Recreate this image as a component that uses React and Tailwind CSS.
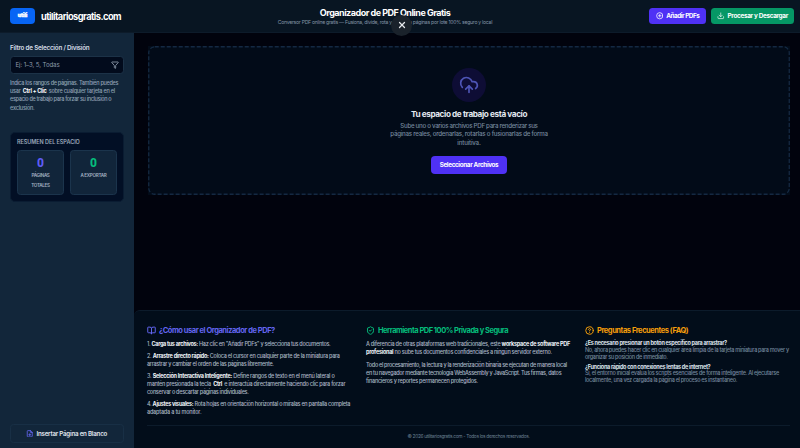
import React from "react";
import {
  BookOpen,
  CircleQuestionMark,
  CirclePlus,
  CloudUpload,
  Download,
  FilePlus,
  Funnel,
  ShieldCheck,
  X,
} from "lucide-react";

// Keeps every row of a paragraph on its own line
function Line({ children, className = "" }) {
  return <span className={`block whitespace-nowrap ${className}`}>{children}</span>;
}

function Strong({ children }) {
  return <strong className="font-bold text-[#f1f5f9]">{children}</strong>;
}

function Header() {
  return (
    <header className="relative flex h-[33px] shrink-0 items-center justify-between border-b border-[#0d1b2a] bg-[#081522] pl-[10px] pr-[6px]">
      <div className="flex items-center gap-[6px]">
        <div className="flex h-[16px] w-[25px] items-center justify-center rounded-[4px] bg-[#0765f5] text-[5.2px] font-black tracking-[-0.1px] text-white [-webkit-text-stroke:0.4px_white]">
          utili
        </div>
        <span className="pt-px text-[9.3px] font-bold tracking-[-0.56px] text-white">
          utilitariosgratis.com
        </span>
      </div>
      <div className="absolute inset-x-0 top-[8px] flex flex-col items-center pr-[30px] whitespace-nowrap">
        <h1 className="text-[9px] leading-[10px] font-bold tracking-[-0.5px] text-white">
          Organizador de PDF Online Gratis
        </h1>
        <p className="text-[5.1px] leading-[8px] tracking-[-0.265px] text-[#8596a8]">
          Conversor PDF online gratis — Fusiona, divide, rota y organiza páginas por lote 100% seguro y local
        </p>
      </div>
      <button className="absolute left-[391px] top-[14.5px] flex h-[21px] w-[21px] items-center justify-center rounded-full bg-[#1a222b] text-[#e4e8ec]">
        <X className="h-[10px] w-[10px]" strokeWidth={3} />
      </button>
      <div className="flex gap-[5px] text-[6.4px] font-bold whitespace-nowrap text-white">
        <button className="flex h-[16px] w-[57px] items-center justify-center gap-[3px] rounded-[3.5px] bg-[#4f31f5] tracking-[-0.48px]">
          <CirclePlus className="h-[7.5px] w-[7.5px]" strokeWidth={2.4} />
          <span className="pt-[1.5px]">Añadir PDFs</span>
        </button>
        <button className="flex h-[16px] w-[83px] items-center justify-center gap-[3px] rounded-[3.5px] bg-[#059765] tracking-[-0.34px]">
          <Download className="h-[7.5px] w-[7.5px]" />
          <span className="pt-[1.5px]">Procesar y Descargar</span>
        </button>
      </div>
    </header>
  );
}

function Stat({ value, color, children }) {
  return (
    <div className="flex h-[45px] w-[47px] flex-col items-center rounded-[3.5px] border border-[#1b344c] bg-[#11253a] pt-[5px]">
      <span className={`font-['Roboto',sans-serif] text-[12px] leading-[14px] font-extrabold ${color}`}>{value}</span>
      <span className="mt-[1px] text-center text-[4.6px] leading-[10px] font-semibold tracking-[-0.3px] whitespace-nowrap text-[#a3b1c2]">
        {children}
      </span>
    </div>
  );
}

function Sidebar() {
  return (
    <aside className="flex w-[134px] shrink-0 flex-col bg-[#12263a] px-[10px] pt-[10px] pb-[5px]">
      <label className="mt-[0.6px] text-[6.3px] leading-[9px] font-semibold tracking-[-0.22px] whitespace-nowrap text-[#d5dde6]">
        Filtro de Selección / División
      </label>
      <div className="mt-[3.4px] flex h-[18px] items-center justify-between rounded-[3.5px] border border-[#1c3247] bg-[#020b1c] pr-[4.5px] pl-[4.5px] text-[#8e9bab]">
        <span className="text-[6.1px] tracking-[-0.1px]">Ej: 1–3, 5, Todas</span>
        <Funnel className="h-[8px] w-[8px]" strokeWidth={2.6} />
      </div>
      <p className="mt-[5px] text-[5.5px] leading-[8.2px] font-medium text-[#8fa1b4]">
        <Line className="tracking-[-0.31px]">Indica los rangos de páginas. También puedes</Line>
        <Line className="tracking-[-0.25px]">
          usar <strong className="mx-[1px] font-bold text-white">Ctrl + Clic</strong> sobre cualquier tarjeta en el
        </Line>
        <Line className="tracking-[-0.34px]">espacio de trabajo para forzar su inclusión o</Line>
        <Line className="tracking-[-0.2px]">exclusión.</Line>
      </p>
      <section className="mt-[20px] h-[70px] rounded-[5px] border border-[#0a1c32] bg-[#020f25] px-[6px] pt-[5px]">
        <h2 className="text-[5.5px] leading-[9px] font-semibold tracking-[-0.06px] whitespace-nowrap text-[#9aa9ba]">
          RESUMEN DEL ESPACIO
        </h2>
        <div className="mt-[3px] flex gap-[6px]">
          <Stat value="0" color="text-[#5f5cf5]">
            PÁGINAS
            <br />
            TOTALES
          </Stat>
          <Stat value="0" color="text-[#05bd7c]">A EXPORTAR</Stat>
        </div>
      </section>
      <button className="mt-auto flex h-[19px] items-center justify-center gap-[3px] rounded-[3.5px] border border-[#182f45] pr-[1px] text-[6.2px] font-semibold tracking-[-0.22px] text-[#e2e8f0]">
        <FilePlus className="h-[7.5px] w-[7.5px] text-[#6366f1]" strokeWidth={2.6} />
        Insertar Página en Blanco
      </button>
    </aside>
  );
}

function EmptyWorkspace() {
  return (
    <section className="relative mt-[13px] mr-[10px] ml-[14px] flex h-[149px] flex-col items-center bg-[#020b18] pt-[22px]">
      <svg className="absolute inset-0 h-full w-full" fill="none">
        <rect x="0.75" y="0.75" width="640.5" height="147.5" rx="6" stroke="#142942" strokeWidth="1.3" strokeDasharray="4 2" />
      </svg>
      <div className="flex h-[34px] w-[34px] items-center justify-center rounded-full bg-[#0e0d35] text-[#4e55b5]">
        <CloudUpload className="h-[20px] w-[20px]" />
      </div>
      <h2 className="mt-[7px] text-[8.2px] leading-[11px] font-bold tracking-[-0.38px] text-[#e2e8f0]">
        Tu espacio de trabajo está vacío
      </h2>
      <p className="mt-[2px] text-center text-[6.2px] leading-[8.4px] font-medium text-[#74879c]">
        <Line className="tracking-[-0.31px]">Sube uno o varios archivos PDF para renderizar sus</Line>
        <Line className="tracking-[-0.25px]">páginas reales, ordenarlas, rotarlas o fusionarlas de forma</Line>
        <Line className="tracking-[-0.2px]">intuitiva.</Line>
      </p>
      <button className="mt-[9px] h-[18px] w-[76px] rounded-[4px] bg-[#4f31f5] pt-px text-[6.3px] font-bold tracking-[-0.34px] whitespace-nowrap text-white">
        Seleccionar Archivos
      </button>
    </section>
  );
}

function InfoTitle({ icon: Icon, color, children }) {
  return (
    <h3 className={`flex h-[10px] items-center gap-[3px] text-[7.5px] font-bold whitespace-nowrap ${color}`}>
      <Icon className="h-[9px] w-[9px]" strokeWidth={2.6} />
      <span className="pt-px">{children}</span>
    </h3>
  );
}

function Footer() {
  return (
    <footer className="mt-auto h-[138px] rounded-tl-[6px] border-t border-[#0c1b2b] bg-[#020d1a] pr-[10px] pl-[13px] pt-[14.4px]">
      <div className="grid h-[101px] grid-cols-[219px_219px_1fr] border-b border-[#0c1b2b] text-[5.5px] leading-[8.1px] font-medium text-[#a9b5c4]">
        <div>
          <InfoTitle icon={BookOpen} color="text-[#6366f1] tracking-[-0.46px]">
            ¿Cómo usar el Organizador de PDF?
          </InfoTitle>
          <ol className="mt-[4.4px] space-y-[3.8px]">
            <li>
              <Line className="tracking-[-0.3px]">1. <Strong>Carga tus archivos:</Strong> Haz clic en "Añadir PDFs" y selecciona tus documentos.</Line>
            </li>
            <li>
              <Line className="tracking-[-0.28px]">2. <Strong>Arrastre directo rápido:</Strong> Coloca el cursor en cualquier parte de la miniatura para</Line>
              <Line className="tracking-[-0.3px]">arrastrar y cambiar el orden de las páginas libremente.</Line>
            </li>
            <li>
              <Line className="tracking-[-0.26px]">3. <Strong>Selección Interactiva Inteligente:</Strong> Define rangos de texto en el menú lateral o</Line>
              <Line className="tracking-[-0.255px]">mantén presionada la tecla <strong className="mx-[1px] font-bold text-white">Ctrl</strong> e interactúa directamente haciendo clic para forzar</Line>
              <Line className="tracking-[-0.31px]">conservar o descartar páginas individuales.</Line>
            </li>
            <li>
              <Line className="tracking-[-0.3px]">4. <Strong>Ajustes visuales:</Strong> Rota hojas en orientación horizontal o míralas en pantalla completa</Line>
              <Line className="tracking-[-0.2px]">adaptada a tu monitor.</Line>
            </li>
          </ol>
        </div>
        <div>
          <InfoTitle icon={ShieldCheck} color="text-[#05bd7c] tracking-[-0.5px]">
            Herramienta PDF 100% Privada y Segura
          </InfoTitle>
          <p className="mt-[4.8px]">
            <Line className="tracking-[-0.265px]">A diferencia de otras plataformas web tradicionales, este <Strong>workspace de software PDF</Strong></Line>
            <Line className="tracking-[-0.28px]"><Strong>profesional</Strong> no sube tus documentos confidenciales a ningún servidor externo.</Line>
          </p>
          <p className="mt-[4.6px]">
            <Line className="tracking-[-0.33px]">Todo el procesamiento, la lectura y la renderización binaria se ejecutan de manera local</Line>
            <Line className="tracking-[-0.3px]">en tu navegador mediante tecnología WebAssembly y JavaScript. Tus firmas, datos</Line>
            <Line className="tracking-[-0.26px]">financieros y reportes permanecen protegidos.</Line>
          </p>
        </div>
        <div>
          <InfoTitle icon={CircleQuestionMark} color="text-[#f59e0b] tracking-[-0.45px]">
            Preguntas Frecuentes (FAQ)
          </InfoTitle>
          <div className="mt-[4.8px] space-y-[3px] leading-[6.8px] text-[#74879c]">
            <div>
              <Line className="font-bold tracking-[-0.31px] text-[#dde4ec]">¿Es necesario presionar un botón específico para arrastrar?</Line>
              <Line className="tracking-[-0.315px]">No, ahora puedes hacer clic en cualquier área limpia de la tarjeta miniatura para mover y</Line>
              <Line className="tracking-[-0.31px]">organizar su posición de inmediato.</Line>
            </div>
            <div>
              <Line className="font-bold tracking-[-0.31px] text-[#dde4ec]">¿Funciona rápido con conexiones lentas de internet?</Line>
              <Line className="tracking-[-0.29px]">Sí, el entorno inicial evalúa los scripts esenciales de forma inteligente. Al ejecutarse</Line>
              <Line className="tracking-[-0.3px]">localmente, una vez cargada la página el proceso es instantáneo.</Line>
            </div>
          </div>
        </div>
      </div>
      <p className="mt-[5.4px] text-center text-[4.8px] leading-[8px] tracking-[-0.31px] text-[#6a8092]">
        © 2026 utilitariosgratis.com - Todos los derechos reservados.
      </p>
    </footer>
  );
}

export default function App() {
  return (
    <div className="flex h-[448px] w-[800px] flex-col overflow-hidden bg-[#01030d] font-['Inter','Liberation_Sans',sans-serif]">
      <Header />
      <div className="flex min-h-0 flex-1">
        <Sidebar />
        <main className="flex min-w-0 flex-1 flex-col">
          <EmptyWorkspace />
          <Footer />
        </main>
      </div>
    </div>
  );
}
